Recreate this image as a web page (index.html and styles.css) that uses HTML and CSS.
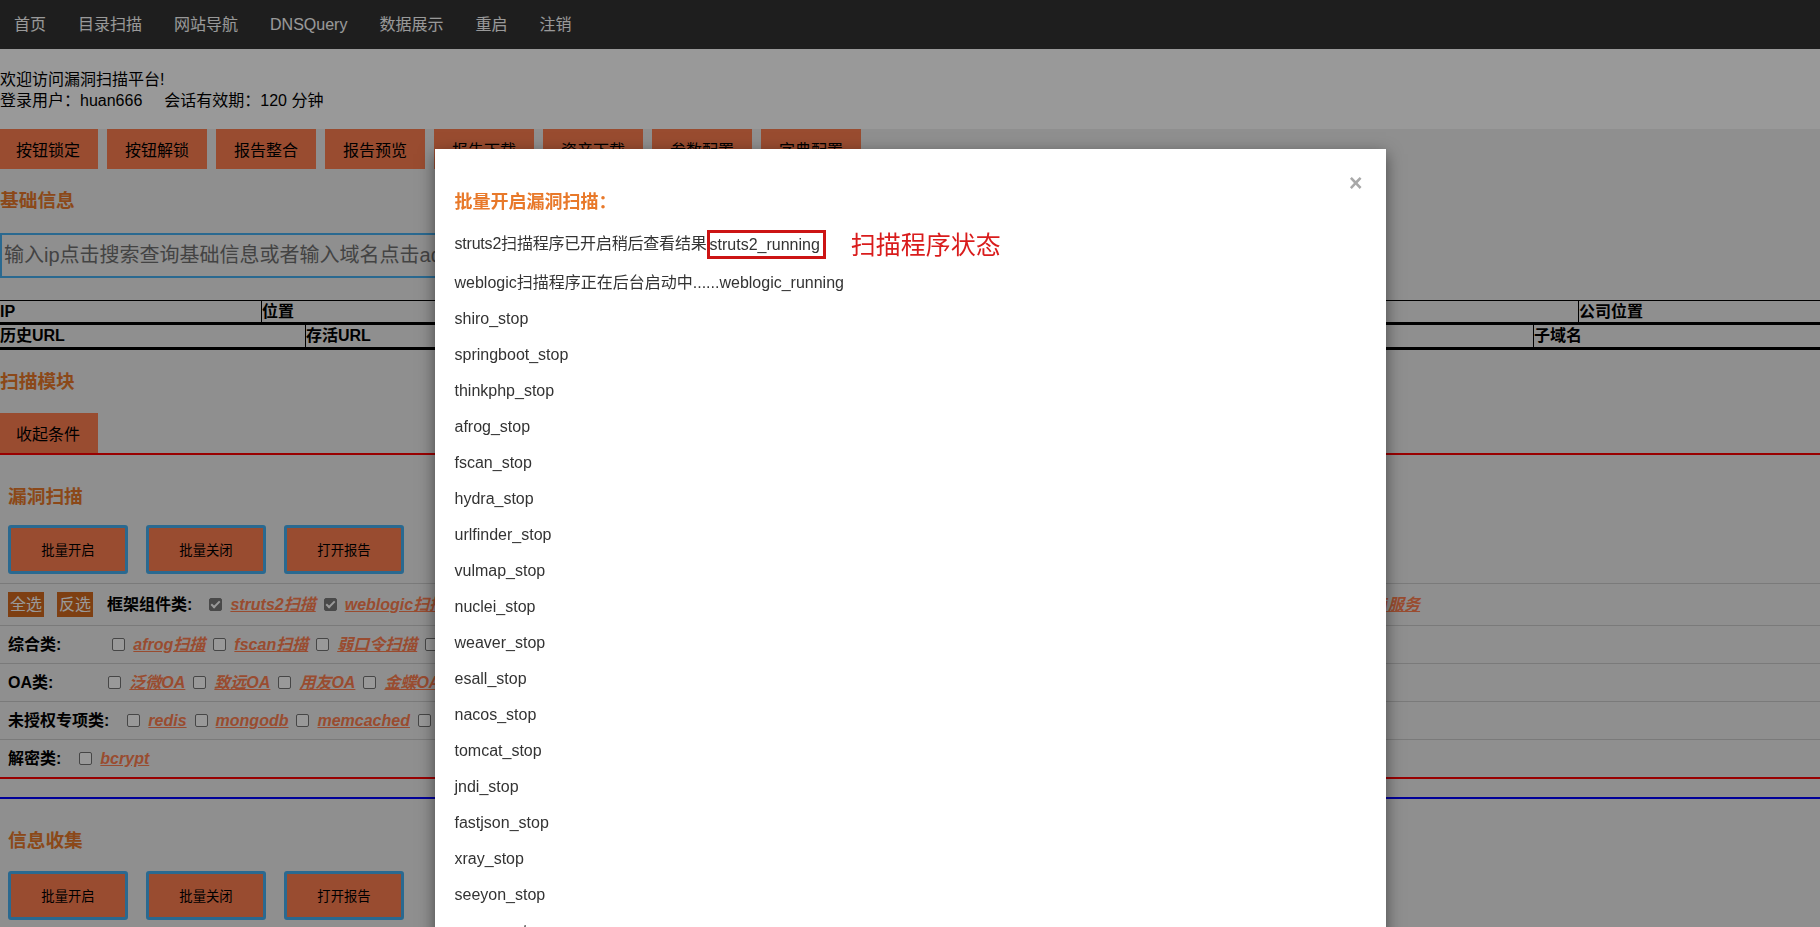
FILE: index.html
```html
<!DOCTYPE html>
<html lang="zh-CN">
<head>
<meta charset="utf-8">
<title>漏洞扫描平台</title>
<link rel="stylesheet" href="styles.css">
</head>
<body>
<nav class="navbar">
  <a href="#">首页</a>
  <a href="#">目录扫描</a>
  <a href="#">网站导航</a>
  <a href="#">DNSQuery</a>
  <a href="#">数据展示</a>
  <a href="#">重启</a>
  <a href="#">注销</a>
</nav>

<header class="welcome">
  <div>欢迎访问漏洞扫描平台!</div>
  <div>登录用户：huan666<span class="expire">会话有效期：120 分钟</span></div>
</header>

<main class="content">
  <div class="toolbar">
    <button class="btn">按钮锁定</button>
    <button class="btn">按钮解锁</button>
    <button class="btn">报告整合</button>
    <button class="btn">报告预览</button>
    <button class="btn">报告下载</button>
    <button class="btn">资产下载</button>
    <button class="btn">参数配置</button>
    <button class="btn">字典配置</button>
  </div>

  <h3 class="sec-title">基础信息</h3>
  <input class="search" type="text" placeholder="输入ip点击搜索查询基础信息或者输入域名点击aqc查询备案信息">

  <table class="info-table t1">
    <tr>
      <th class="w-ip">IP</th>
      <th class="w-loc">位置</th>
      <th class="w-port">端口</th>
      <th class="w-org">组织</th>
      <th>公司位置</th>
    </tr>
  </table>
  <table class="info-table t2">
    <tr>
      <th class="w-hist">历史URL</th>
      <th class="w-live">存活URL</th>
      <th class="w-title">网站标题</th>
      <th>子域名</th>
    </tr>
  </table>

  <section class="module">
    <h3 class="sec-title tight">扫描模块</h3>
    <div class="toolbar">
      <button class="btn">收起条件</button>
    </div>
  </section>

  <section class="scan-group vuln">
    <h3 class="sec-title inset">漏洞扫描</h3>
    <div class="op-row">
      <button class="op-btn">批量开启</button>
      <button class="op-btn">批量关闭</button>
      <button class="op-btn">打开报告</button>
    </div>

    <div class="opt-row first">
      <span class="tag">全选</span>
      <span class="tag second">反选</span>
      <span class="opt-label gap-s">框架组件类:</span>
      <input type="checkbox" checked><a href="#">struts2扫描</a>
      <input type="checkbox" checked><a href="#">weblogic扫描</a>
      <input type="checkbox"><a href="#">shiro扫描</a>
      <input type="checkbox"><a href="#">springboot扫描</a>
      <input type="checkbox"><a href="#">thinkphp扫描</a>
      <input type="checkbox"><a href="#">tomcat扫描</a>
      <input type="checkbox"><a href="#">jboss扫描</a>
      <input type="checkbox"><a href="#">fastjson扫描</a>
      <input type="checkbox"><a href="#">log4j扫描</a>
      <input type="checkbox"><a href="#">xxljob</a>
      <input type="checkbox"><a href="#">jndi服务</a>
    </div>
    <div class="opt-row">
      <span class="opt-label gap-l">综合类:</span>
      <input type="checkbox"><a href="#">afrog扫描</a>
      <input type="checkbox"><a href="#">fscan扫描</a>
      <input type="checkbox"><a href="#">弱口令扫描</a>
      <input type="checkbox"><a href="#">urlfinder扫描</a>
      <input type="checkbox"><a href="#">vulmap扫描</a>
      <input type="checkbox"><a href="#">nuclei扫描</a>
      <input type="checkbox"><a href="#">xray扫描</a>
    </div>
    <div class="opt-row">
      <span class="opt-label gap-xl">OA类:</span>
      <input type="checkbox"><a href="#">泛微OA</a>
      <input type="checkbox"><a href="#">致远OA</a>
      <input type="checkbox"><a href="#">用友OA</a>
      <input type="checkbox"><a href="#">金蝶OA</a>
      <input type="checkbox"><a href="#">通达OA</a>
    </div>
    <div class="opt-row">
      <span class="opt-label gap-m">未授权专项类:</span>
      <input type="checkbox"><a href="#">redis</a>
      <input type="checkbox"><a href="#">mongodb</a>
      <input type="checkbox"><a href="#">memcached</a>
      <input type="checkbox"><a href="#">zookeeper</a>
    </div>
    <div class="opt-row">
      <span class="opt-label gap-m">解密类:</span>
      <input type="checkbox"><a href="#">bcrypt</a>
    </div>
  </section>

  <section class="scan-group info">
    <h3 class="sec-title inset">信息收集</h3>
    <div class="op-row">
      <button class="op-btn">批量开启</button>
      <button class="op-btn">批量关闭</button>
      <button class="op-btn">打开报告</button>
    </div>
  </section>
</main>

<div class="backdrop"></div>

<div class="modal">
  <div class="modal-dialog">
    <button class="close" type="button">×</button>
    <h4 class="modal-title">批量开启漏洞扫描：</h4>
    <div class="modal-body">
      <p class="first">struts2扫描程序已开启稍后查看结果<span class="mark">struts2_running</span><span class="note">扫描程序状态</span></p>
      <p>weblogic扫描程序正在后台启动中......weblogic_running</p>
      <p>shiro_stop</p>
      <p>springboot_stop</p>
      <p>thinkphp_stop</p>
      <p>afrog_stop</p>
      <p>fscan_stop</p>
      <p>hydra_stop</p>
      <p>urlfinder_stop</p>
      <p>vulmap_stop</p>
      <p>nuclei_stop</p>
      <p>weaver_stop</p>
      <p>esall_stop</p>
      <p>nacos_stop</p>
      <p>tomcat_stop</p>
      <p>jndi_stop</p>
      <p>fastjson_stop</p>
      <p>xray_stop</p>
      <p>seeyon_stop</p>
      <p>yonyou_stop</p>
    </div>
  </div>
</div>
</body>
</html>
```

FILE: styles.css
```css
html, body {
  margin: 0;
  padding: 0;
  overflow: hidden;
}

body {
  background: #eeeeee;
  color: #000;
  font-family: "Liberation Sans", "Noto Sans CJK SC", sans-serif;
  font-size: 16px;
  line-height: 21px;
}

/* ---------- top navigation ---------- */
.navbar {
  height: 49px;
  background: #333333;
  display: flex;
  align-items: center;
  gap: 32px;
  padding-left: 14px;
}

.navbar a {
  color: #ffffff;
  text-decoration: none;
  font-size: 16px;
}

/* ---------- welcome band ---------- */
.welcome {
  background: #ffffff;
  padding: 20px 0 18px;
  line-height: 21px;
}

.expire {
  margin-left: 22px;
}

/* ---------- buttons ---------- */
.toolbar {
  display: flex;
  gap: 9px;
  margin-left: -2px;
}

.btn {
  width: 100px;
  height: 40px;
  border: 0;
  padding: 0;
  background: coral;
  color: #000;
  font-family: inherit;
  font-size: 16px;
}

.sec-title {
  margin: 21px 0;
  font-size: 18.72px;
  line-height: 22px;
  font-weight: bold;
  color: #e8792a;
}

.sec-title.tight {
  margin-bottom: 20px;
}

.sec-title.inset {
  margin: 31px 0 17px 8px;
}

.search {
  display: block;
  box-sizing: border-box;
  width: 900px;
  height: 45px;
  margin: 0;
  padding: 0 2px;
  border: 2px solid #46aff0;
  background: transparent;
  font-family: inherit;
  font-size: 20px;
  outline: none;
}

.search::placeholder {
  color: #707070;
}

/* ---------- tables ---------- */
.info-table {
  width: 100%;
  border-collapse: collapse;
  table-layout: fixed;
}

.info-table th {
  padding: 0;
  text-align: left;
  font-weight: bold;
  font-size: 16px;
  border-left: 1px solid #000;
}

.info-table th:first-child {
  border-left: 0;
}

.t1 {
  margin-top: 22px;
  border-top: 1px solid #000;
  border-bottom: 3px solid #000;
}

.t1 th {
  height: 21px;
  line-height: 21px;
}

.t2 {
  border-bottom: 3px solid #000;
}

.t2 th {
  height: 22px;
  line-height: 22px;
}

.w-ip { width: 261px; }
.w-loc { width: 400px; }
.w-port { width: 400px; }
.w-org { width: 514px; }
.w-hist { width: 305px; }
.w-live { width: 620px; }
.w-title { width: 606px; }

/* ---------- scan module ---------- */
.module {
  border-bottom: 2px solid #ff0000;
}

.vuln {
  border-bottom: 2px solid #ff0000;
}

.info {
  margin-top: 18px;
  border-top: 2px solid #0000ff;
}

.info .op-row {
  margin-top: 19px;
}

.op-row {
  display: flex;
  gap: 18px;
  margin-left: 8px;
  margin-bottom: 9px;
}

.op-btn {
  box-sizing: border-box;
  width: 120px;
  height: 49px;
  border: 3px solid #46aff0;
  border-radius: 3px;
  background: coral;
  color: #000;
  font-family: inherit;
  font-size: 13.33px;
  padding: 0;
}

.opt-row {
  display: flex;
  align-items: center;
  height: 37px;
  border-top: 1px solid #cccccc;
  padding-left: 8px;
  white-space: nowrap;
}

.opt-row.first {
  height: 41px;
}

.tag {
  background: chocolate;
  color: #ffffff;
  padding: 2px 2px;
  line-height: 21px;
  margin-right: 13px;
}

.tag.second {
  margin-right: 14px;
}

.opt-label {
  font-weight: bold;
}

.gap-s { margin-right: 17px; }
.gap-m { margin-right: 18px; }
.gap-l { margin-right: 51px; }
.gap-xl { margin-right: 55px; }

.opt-row input[type="checkbox"] {
  -webkit-appearance: none;
  appearance: none;
  box-sizing: border-box;
  flex: none;
  position: relative;
  width: 13px;
  height: 13px;
  margin: 0 8px 0 0;
  border: 1px solid #767676;
  border-radius: 2px;
  background: #ffffff;
}

.opt-row input[type="checkbox"]:checked {
  background: #7a7a7a;
  border-color: #7a7a7a;
}

.opt-row input[type="checkbox"]:checked::after {
  content: "";
  position: absolute;
  left: 3px;
  top: 0px;
  width: 3px;
  height: 7px;
  border: solid #ffffff;
  border-width: 0 2px 2px 0;
  transform: rotate(45deg);
}

.opt-row a {
  color: coral;
  font-weight: bold;
  font-style: italic;
  text-decoration: underline;
  margin-right: 8px;
}

/* ---------- modal ---------- */
.backdrop {
  position: fixed;
  inset: 0;
  background: rgba(0, 0, 0, 0.4);
  z-index: 10;
}

.modal {
  position: fixed;
  inset: 0;
  overflow: hidden;
  z-index: 20;
}

.modal-dialog {
  position: relative;
  width: 951px;
  margin: 149px auto 0;
  background: #ffffff;
  box-shadow: 0 5px 15px rgba(0, 0, 0, 0.5);
  color: #333333;
}

.close {
  position: absolute;
  top: 23px;
  right: 23px;
  padding: 0;
  border: 0;
  background: none;
  font-family: "Liberation Sans", sans-serif;
  font-size: 23px;
  font-weight: bold;
  line-height: 23px;
  color: #a8a8a8;
}

.modal-title {
  margin: 0;
  padding: 42px 20px 0;
  font-size: 18px;
  line-height: 22px;
  font-weight: bold;
  color: #e8792a;
}

.modal-body {
  padding: 11px 20px 20px;
}

.modal-body p {
  margin: 0;
  line-height: 36px;
  font-size: 16px;
}

.modal-body p.first {
  line-height: 40px;
  letter-spacing: -0.2px;
}

.mark {
  display: inline-block;
  vertical-align: middle;
  padding: 1px 3px 1px 0;
  line-height: 21px;
  border: 3px solid #cc1414;
  color: #333333;
  letter-spacing: 0;
}

.note {
  margin-left: 25px;
  font-size: 25px;
  color: #d91c1c;
  vertical-align: middle;
  letter-spacing: 0;
}
```
